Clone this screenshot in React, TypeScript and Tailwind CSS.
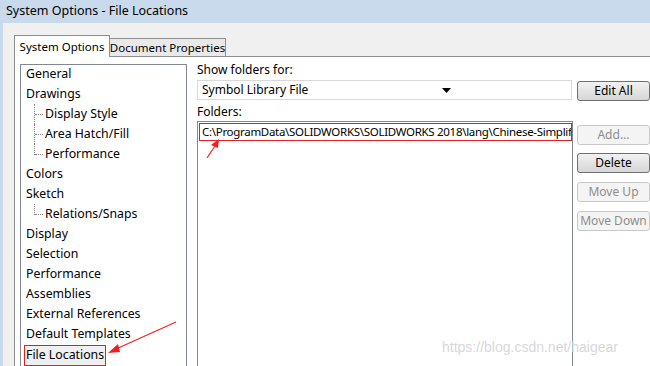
const tree: { label: string; child?: boolean; last?: boolean }[] = [
  { label: "General" },
  { label: "Drawings" },
  { label: "Display Style", child: true },
  { label: "Area Hatch/Fill", child: true },
  { label: "Performance", child: true, last: true },
  { label: "Colors" },
  { label: "Sketch" },
  { label: "Relations/Snaps", child: true, last: true },
  { label: "Display" },
  { label: "Selection" },
  { label: "Performance" },
  { label: "Assemblies" },
  { label: "External References" },
  { label: "Default Templates" },
];

function Btn({ label, disabled, className }: { label: string; disabled?: boolean; className?: string }) {
  return (
    <div
      className={
        (disabled
          ? "h-[20px] w-[73px] flex items-center justify-center rounded-[3px] border border-[#c8c8c8] bg-[#f4f4f4] text-[#8d8d8d] "
          : "h-[20px] w-[73px] flex items-center justify-center rounded-[3px] border border-[#707070] bg-gradient-to-b from-[#f2f2f2] to-[#d6d6d6] text-black ") +
        (className ?? "")
      }
    >
      {label}
    </div>
  );
}

export default function App() {
  return (
    <div
      className="relative w-[650px] h-[366px] overflow-hidden bg-[#c9daec] text-[12px] leading-none"
      style={{ fontFamily: '"Noto Sans", "Liberation Sans", sans-serif' }}
    >
      {/* title bar */}
      <div className="h-[23px] pl-[6px] flex items-center text-[12.5px] text-black">
        System Options - File Locations
      </div>

      <div className="ml-[3px] h-[343px] bg-[#f0f0f0] pl-[11px] pt-[11px]">
        {/* tabs */}
        <div className="flex items-end h-[22px] whitespace-nowrap text-[11.5px]">
          <div className="h-[22px] w-[96px] bg-white border border-b-0 border-[#8e8f8f] flex items-center justify-center relative z-10 -mb-px">
            System Options
          </div>
          <div className="h-[18px] w-[116px] bg-[#e9e9e9] border border-b-0 border-l-0 border-[#8e8f8f] flex items-center justify-center">
            Document Properties
          </div>
        </div>

        {/* tab page */}
        <div className="h-[320px] bg-white border-t border-l border-[#8e8f8f] pl-[5px] pt-[7px] flex">
          {/* tree */}
          <div className="w-[168px] h-[310px] border border-[#828790] pl-[5px] whitespace-nowrap text-[12.3px]">
            <div className="-mt-[1px]">
              {tree.map((t, i) => (
                <div key={i} className="h-[20px] flex items-center">
                  {t.child && (
                    <div className="relative w-[19px] h-[20px] shrink-0">
                      <div
                        className={
                          t.last
                            ? "absolute left-[8px] top-0 h-[11px] border-l border-dotted border-[#888]"
                            : "absolute left-[8px] top-0 h-[20px] border-l border-dotted border-[#888]"
                        }
                      />
                      <div className="absolute left-[9px] top-[10px] w-[8px] border-t border-dotted border-[#888]" />
                    </div>
                  )}
                  <span className="text-black">{t.label}</span>
                </div>
              ))}
              <div className="h-[22px] flex items-center">
                <span className="-ml-[2px] px-[1px] h-[21px] flex items-center border border-[#e02020] bg-[#f0f0f0]">
                  File Locations
                </span>
              </div>
            </div>
          </div>

          {/* right side */}
          <div className="ml-[10px] flex-1 flex">
            <div className="w-[376px] -mt-[1px]">
              <div className="h-[14px] flex items-center">Show folders for:</div>
              <div className="mt-[3px] h-[20px] w-[375px] border border-[#d9d9d9] bg-white flex items-center pl-[4px] pr-[120px] justify-between">
                <span>Symbol Library File</span>
                <svg width="9" height="5" viewBox="0 0 9 5">
                  <path d="M0 0h9L4.5 5z" fill="#000" />
                </svg>
              </div>
              <div className="mt-[5px] h-[14px] flex items-center">Folders:</div>
              <div className="mt-[2px] h-[250px] w-[376px] border border-[#828790] pl-[1px] pt-[1px]">
                <div className="h-[18px] w-[373px] border border-[#e02020] overflow-hidden whitespace-nowrap flex items-center pl-[2px] text-[11.5px] tracking-[-0.3px]">
                  C:\ProgramData\SOLIDWORKS\SOLIDWORKS 2018\lang\Chinese-Simplified
                </div>
              </div>
            </div>

            <div className="ml-[4px] pt-[17px] flex flex-col whitespace-nowrap">
              <Btn label="Edit All" />
              <Btn label="Add..." disabled className="mt-[24px]" />
              <Btn label="Delete" className="mt-[8px]" />
              <Btn label="Move Up" disabled className="mt-[9px]" />
              <Btn label="Move Down" disabled className="mt-[9px]" />
            </div>
          </div>
        </div>
      </div>

      {/* annotation arrows */}
      <svg className="absolute left-0 top-0" width="650" height="366">
        <line x1="176" y1="322" x2="116" y2="349" stroke="#f02020" strokeWidth="1.2" />
        <path d="M108 353 L118 344 L120 352 Z" fill="#f02020" />
        <line x1="207" y1="158" x2="215" y2="146" stroke="#f02020" strokeWidth="1.2" />
        <path d="M219 139 L211 145 L218 148 Z" fill="#f02020" />
      </svg>

      {/* watermark */}
      <div
        className="absolute left-[442px] top-[340px] text-[14px] text-[#d8d8d8]"
        style={{ fontFamily: '"Liberation Sans", sans-serif' }}
      >
        https://blog.csdn.net/haigear
      </div>
    </div>
  );
}
